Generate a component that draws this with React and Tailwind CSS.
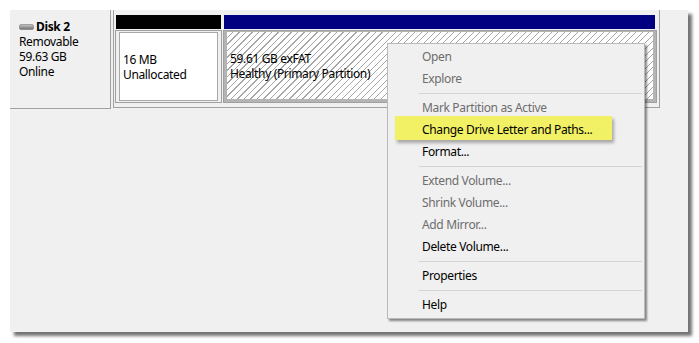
import React from 'react';

const items = [
  { label: 'Open', off: true },
  { label: 'Explore', off: true },
  { sep: true },
  { label: 'Mark Partition as Active', off: true },
  { label: 'Change Drive Letter and Paths...', mark: true },
  { label: 'Format...' },
  { sep: true },
  { label: 'Extend Volume...', off: true },
  { label: 'Shrink Volume...', off: true },
  { label: 'Add Mirror...', off: true },
  { label: 'Delete Volume...' },
  { sep: true },
  { label: 'Properties' },
  { sep: true },
  { label: 'Help' },
];

function DiskIcon() {
  return (
    <svg width="15" height="6" viewBox="0 0 15 6" className="mr-[1px]">
      <defs>
        <linearGradient id="dk" x1="0" y1="0" x2="0" y2="1">
          <stop offset="0" stopColor="#c8c8c8" />
          <stop offset="1" stopColor="#6e6e6e" />
        </linearGradient>
      </defs>
      <rect x="0.5" y="0.5" width="14" height="5" rx="1.5" fill="url(#dk)" stroke="#7a7a7a" strokeWidth="0.6" />
    </svg>
  );
}

function ContextMenu() {
  return (
    <div className="absolute left-[377px] top-[33px] w-[258px] bg-[#f0f0f0] border border-[#b9b9b9] p-[2px] shadow-[2px_2px_2px_rgba(0,0,0,0.45)]">
      {items.map((it, i) =>
        it.sep ? (
          <div key={i} className="h-[7px] flex items-center pl-[29px]">
            <div className="w-full border-t border-[#d4d4d4]" />
          </div>
        ) : (
          <div
            key={i}
            className={`relative h-[22px] flex items-center pl-[32px] pb-[2px] ${it.off ? 'text-[#6d6d6d]' : 'text-black'}`}
          >
            {it.mark && (
              <span className="absolute left-[5px] top-[-3px] w-[217px] h-[24px] bg-[#f2f064] shadow-[2px_3px_3px_rgba(0,0,0,0.3)]" />
            )}
            <span className="relative">{it.label}</span>
          </div>
        )
      )}
    </div>
  );
}

export default function App() {
  return (
    <div className="w-[699px] h-[343px] bg-white pl-[10px] pt-[10px] font-['Noto_Sans',sans-serif] text-[12px] leading-[15px] tracking-[-0.35px]">
      <div className="relative w-[678px] h-[322px] bg-[#f0f0f0] shadow-[4px_4px_3px_rgba(0,0,0,0.55)]">
        <div className="flex items-start">
          {/* disk label */}
          <div className="w-[101px] h-[99px] border-r border-b border-[#a0a0a0] pl-[9px] pt-[9px]">
            <div className="flex items-center font-bold">
              <DiskIcon />
              <span className="ml-[1px]">Disk 2</span>
            </div>
            <div>Removable</div>
            <div>59.63 GB</div>
            <div>Online</div>
          </div>

          {/* partitions */}
          <div className="ml-[2px] w-[547px] h-[98px] border-l border-r border-b border-[#a0a0a0] pt-[5px] pl-[1px] flex gap-[1px]">
            <div className="w-[107px] flex flex-col">
              <div className="h-[14px] bg-black mx-[1px]" />
              <div className="mt-[1px] h-[73px] border border-[#a0a0a0] p-[3px] pt-[1px] pb-[1px]">
                <div className="h-full bg-white border border-[#a8a8a8] flex flex-col justify-center pl-[3px]">
                  <div>16 MB</div>
                  <div>Unallocated</div>
                </div>
              </div>
            </div>
            <div className="w-[434px] flex flex-col">
              <div className="h-[14px] bg-[#000080] ml-[1px] mr-[2px]" />
              <div className="mt-[1px] h-[73px] border border-[#a0a0a0] bg-[#b4b4b4] p-[3px] pt-[1px]">
                <div className="h-full bg-[image:repeating-linear-gradient(135deg,#ffffff_0_3.8px,#a6a6a6_3.8px_4.6px)] flex flex-col justify-center pl-[3px]">
                  <div>59.61 GB exFAT</div>
                  <div>Healthy (Primary Partition)</div>
                </div>
              </div>
            </div>
          </div>
        </div>

        <ContextMenu />
      </div>
    </div>
  );
}
